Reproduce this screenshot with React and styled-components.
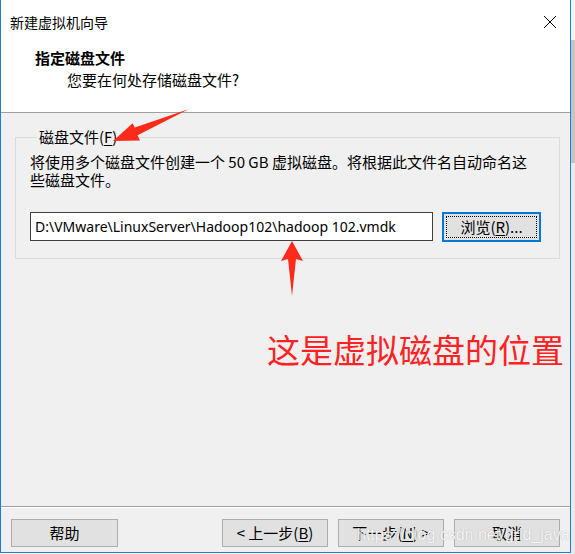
import React from "react";
import styled, { createGlobalStyle } from "styled-components";

const CJK = `"Noto Sans CJK SC", "Noto Sans", sans-serif`;

const GlobalStyle = createGlobalStyle`
  html, body {
    margin: 0;
    padding: 0;
    background: #ffffff;
  }
  body {
    font-family: ${CJK};
    font-size: 15px;
    color: #000;
  }
`;

const Page = styled.div`
  position: relative;
  display: flex;
  width: 575px;
  height: 554px;
  overflow: hidden;
`;

const Window = styled.div`
  width: 569px;
  height: 552px;
  display: flex;
  flex-direction: column;
  border: 1px solid #1a7fd4;
  border-top: none;
  background: #f0f0f0;
`;

const ScrollStrip = styled.div`
  flex: 1;
  display: flex;
  flex-direction: column;
  background: #e9e9e9;
`;

const ScrollGap = styled.div`
  height: ${(p) => p.h}px;
  background: ${(p) => p.bg};
`;

const Header = styled.div`
  flex: none;
  height: 112px;
  background: #ffffff;
  border-bottom: 1px solid #a0a0a0;
  display: flex;
  flex-direction: column;
`;

const TitleBar = styled.div`
  height: 44px;
  display: flex;
  align-items: center;
  justify-content: space-between;
  padding-left: 9px;
`;

const Title = styled.div`
  font-size: 14px;
  line-height: 20px;
  margin-top: -1px;
`;

const CloseBox = styled.div`
  width: 40px;
  height: 44px;
  display: flex;
  align-items: center;
  justify-content: center;
`;

const Heading = styled.div`
  margin-top: 4px;
  padding-left: 34px;
  font-weight: 700;
  line-height: 20px;
`;

const Subtitle = styled.div`
  margin-top: 2px;
  padding-left: 66px;
  line-height: 20px;
`;

const Body = styled.div`
  flex: 1;
  padding: 14px 10px 0 14px;
`;

const Group = styled.fieldset`
  margin: 0;
  padding: 0 14px 17px 14px;
  border: 1px solid #dcdcdc;
  min-width: 0;
`;

const Legend = styled.legend`
  margin-left: 7px;
  padding: 0 2px;
  line-height: 20px;
`;

const Underline = styled.span`
  text-decoration: underline;
  text-underline-offset: 2px;
`;

const Description = styled.div`
  margin-top: 6px;
  line-height: 18px;
`;

const FileRow = styled.div`
  display: flex;
  align-items: flex-start;
  gap: 10px;
  margin-top: 23px;
`;

const PathInput = styled.div`
  width: 397px;
  height: 27px;
  padding-left: 4px;
  display: flex;
  align-items: center;
  background: #ffffff;
  border: 1px solid #404040;
  font-family: "Noto Sans", ${CJK};
  font-size: 14px;
  color: #000;
  white-space: nowrap;
`;

const Button = styled.div`
  box-sizing: border-box;
  width: ${(p) => p.w || 106}px;
  height: 28px;
  display: flex;
  align-items: center;
  justify-content: center;
  background: #e1e1e1;
  border: 1px solid ${(p) => (p.focused ? "#0078d7" : "#adadad")};
  outline: ${(p) => (p.focused ? "1px solid #0078d7" : "none")};
  line-height: 20px;
  position: relative;
  margin-top: ${(p) => p.mt || 0}px;
`;

const FocusRing = styled.span`
  position: absolute;
  inset: 2px;
  border: 1px dotted #000;
`;

const Footer = styled.div`
  flex: none;
  box-sizing: border-box;
  height: 46px;
  border-top: 1px solid #a0a0a0;
  box-shadow: inset 0 1px 0 #ffffff;
  display: flex;
  align-items: flex-start;
  padding: 12px 10px 0 10px;
  gap: 10px;
`;

const Spacer = styled.div`
  flex: 1;
`;

const Overlay = styled.svg`
  position: absolute;
  left: 0;
  top: 0;
  pointer-events: none;
`;

const Note = styled.div`
  position: absolute;
  left: 267px;
  top: 329px;
  color: #ff2222;
  font-size: 33px;
  line-height: 40px;
  white-space: nowrap;
`;

const Watermark = styled.div`
  position: absolute;
  left: 357px;
  top: 524px;
  font-family: "Liberation Sans", Arial, sans-serif;
  font-size: 16px;
  line-height: 22px;
  color: rgba(255, 255, 255, 0.9);
  text-shadow: 0 0 1px rgba(120, 120, 120, 0.6);
  white-space: nowrap;
`;

const CloseIcon = () => (
  <svg width="14" height="14" viewBox="0 0 14 14">
    <path d="M1 1 L13 13 M13 1 L1 13" stroke="#000" strokeWidth="1" />
  </svg>
);

const App = () => (
  <>
    <GlobalStyle />
    <Page>
      <Window>
        <Header>
          <TitleBar>
            <Title>新建虚拟机向导</Title>
            <CloseBox>
              <CloseIcon />
            </CloseBox>
          </TitleBar>
          <Heading>指定磁盘文件</Heading>
          <Subtitle>您要在何处存储磁盘文件?</Subtitle>
        </Header>

        <Body>
          <Group>
            <Legend>
              磁盘文件(<Underline>F</Underline>)
            </Legend>
            <Description>
              将使用多个磁盘文件创建一个 50 GB 虚拟磁盘。将根据此文件名自动命名这
              <br />
              些磁盘文件。
            </Description>
            <FileRow>
              <PathInput>D:\VMware\LinuxServer\Hadoop102\hadoop 102.vmdk</PathInput>
              <Button w={97} mt={1} focused>
                <FocusRing />
                浏览(<Underline>R</Underline>)...
              </Button>
            </FileRow>
          </Group>
        </Body>

        <Footer>
          <Button w={107}>帮助</Button>
          <Spacer />
          <Button>
            &lt; 上一步(<Underline>B</Underline>)
          </Button>
          <Button>
            下一步(<Underline>N</Underline>) &gt;
          </Button>
          <Button>取消</Button>
        </Footer>
      </Window>

      <ScrollStrip>
        <ScrollGap h={40} bg="#f4f4f4" />
        <ScrollGap h={123} bg="#c4c4c4" />
      </ScrollStrip>

      <Overlay width="575" height="554">
        <polygon
          points="113,141 132.6,123.2 134.8,127.6 189,109 137.6,135.2 140,140.5"
          fill="#ff2a1a"
        />
        <polygon
          points="292,241 303,261 296,259 292,296 288,259 281,261"
          fill="#ff2a1a"
        />
      </Overlay>
      <Note>这是虚拟磁盘的位置</Note>
      <Watermark>https://blog.csdn.net/grid_java</Watermark>
    </Page>
  </>
);

export default App;
